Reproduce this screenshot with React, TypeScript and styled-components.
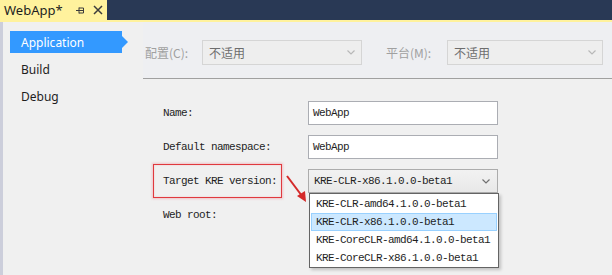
import styled, { createGlobalStyle } from "styled-components";

const GlobalStyle = createGlobalStyle`
  html, body {
    margin: 0;
    padding: 0;
    background: #f0f0f0;
  }
  body {
    width: 612px;
    height: 275px;
    overflow: hidden;
    font-family: "Noto Sans", "Noto Sans CJK SC", sans-serif;
  }
`;

const Window = styled.div`
  width: 612px;
  height: 275px;
  display: flex;
  flex-direction: column;
  background: #f0f0f0;
`;

const TabWell = styled.div`
  height: 20px;
  display: flex;
  background: #293955;
  border-bottom: 2px solid #fff29d;
`;

const Tab = styled.div`
  width: 107px;
  height: 20px;
  background: #fff29d;
  display: flex;
  align-items: center;
  padding-left: 4px;
  box-sizing: border-box;
  gap: 8px;
  color: #1e1e1e;
  font-size: 13px;
`;

const TabTitle = styled.span`
  width: 63px;
`;

const TabIcon = styled.svg`
  width: 10px;
  height: 10px;
  flex: none;
`;

const Body = styled.div`
  flex: 1;
  display: flex;
  border-left: 3px solid #cccedb;
`;

const Sidebar = styled.nav`
  width: 140px;
  padding-top: 9px;
  display: flex;
  flex-direction: column;
  gap: 5px;
`;

const NavItem = styled.div<{ $active?: boolean }>`
  position: relative;
  margin-left: 7px;
  width: 112px;
  height: 22px;
  box-sizing: border-box;
  padding-left: 11px;
  display: flex;
  align-items: center;
  font-size: 12px;
  color: ${(p) => (p.$active ? "#ffffff" : "#1e1e1e")};
  background: ${(p) => (p.$active ? "#3399ff" : "transparent")};

  ${(p) =>
    p.$active &&
    `
    &::after {
      content: "";
      position: absolute;
      right: -6px;
      top: 5px;
      border-top: 6px solid transparent;
      border-bottom: 6px solid transparent;
      border-left: 6px solid #3399ff;
    }
  `}
`;

const Content = styled.div`
  flex: 1;
  display: flex;
  flex-direction: column;
`;

const ConfigBar = styled.div`
  height: 57px;
  box-sizing: border-box;
  padding: 18px 0 0 2px;
  display: flex;
  gap: 24px;
  border-bottom: 1px solid #a0a0a0;
  background: #eeeff2;
`;

const ConfigGroup = styled.div<{ $labelWidth: number; $width: number }>`
  display: flex;
  align-items: flex-start;
  width: ${(p) => p.$labelWidth + p.$width}px;

  & > span {
    width: ${(p) => p.$labelWidth}px;
  }
  & > div {
    width: ${(p) => p.$width}px;
  }
`;

const ConfigLabel = styled.span`
  height: 25px;
  display: flex;
  align-items: center;
  font-family: "Noto Sans CJK SC", sans-serif;
  font-size: 12px;
  color: #a0a0a0;
`;

const DisabledSelect = styled.div`
  height: 25px;
  box-sizing: border-box;
  border: 1px solid #d5d5d5;
  background: #eeeeee;
  display: flex;
  align-items: center;
  justify-content: space-between;
  padding: 0 6px 0 6px;
  font-family: "Noto Sans CJK SC", sans-serif;
  font-size: 12px;
  color: #6d6d6d;
`;

const Chevron = styled.svg<{ $color?: string }>`
  width: 8px;
  height: 5px;
  flex: none;
  stroke: ${(p) => p.$color || "#b8b8b8"};
`;

const Form = styled.div`
  position: relative;
  padding: 22px 0 0 20px;
  display: grid;
  grid-template-columns: 145px 190px;
  grid-auto-rows: 24px;
  row-gap: 10px;
  font-family: "Liberation Mono", monospace;
  font-size: 11px;
  letter-spacing: -0.6px;
  color: #1e1e1e;
`;

const Label = styled.div<{ $marked?: boolean }>`
  display: flex;
  align-items: center;
  ${(p) =>
    p.$marked &&
    `
    margin: -5px 0 -5px -10px;
    width: 129px;
    padding-left: 9px;
    box-sizing: border-box;
    border: 1px solid #e0393e;
    box-shadow: 0 0 2px 1px rgba(240, 140, 150, 0.45), inset 0 0 2px rgba(240, 140, 150, 0.4);
  `}
`;

const TextBox = styled.div`
  box-sizing: border-box;
  border: 1px solid #abadb3;
  background: #ffffff;
  display: flex;
  align-items: center;
  padding-left: 4px;
`;

const SelectBox = styled.div`
  position: relative;
  box-sizing: border-box;
  border: 1px solid #acacac;
  background: linear-gradient(#f2f2f2, #e8e8e8);
  display: flex;
  align-items: center;
  justify-content: space-between;
  padding: 0 7px 0 5px;
`;

const DropList = styled.div`
  position: absolute;
  left: 0;
  top: 23px;
  width: 190px;
  box-sizing: border-box;
  border: 1px solid #646464;
  background: #ffffff;
  padding: 1px 1px 0;
  box-shadow: 2px 2px 3px rgba(0, 0, 0, 0.2);
  z-index: 2;
`;

const DropItem = styled.div<{ $selected?: boolean }>`
  height: 18px;
  box-sizing: border-box;
  display: flex;
  align-items: center;
  padding-left: 4px;
  border: 1px solid ${(p) => (p.$selected ? "#99d1ff" : "transparent")};
  background: ${(p) => (p.$selected ? "#cce8ff" : "transparent")};
`;

const Pointer = styled.svg`
  position: absolute;
  left: 142px;
  top: 95px;
  width: 24px;
  height: 30px;
`;

const kreVersions = [
  "KRE-CLR-amd64.1.0.0-beta1",
  "KRE-CLR-x86.1.0.0-beta1",
  "KRE-CoreCLR-amd64.1.0.0-beta1",
  "KRE-CoreCLR-x86.1.0.0-beta1",
];

function DownArrow({ color }: { color?: string }) {
  return (
    <Chevron $color={color} viewBox="0 0 8 5" fill="none" strokeWidth="1.2">
      <path d="M0.5 0.5 L4 4 L7.5 0.5" />
    </Chevron>
  );
}

export default function App() {
  return (
    <Window>
      <GlobalStyle />
      <TabWell>
        <Tab>
          <TabTitle>WebApp*</TabTitle>
          <TabIcon viewBox="0 0 10 10" fill="none" stroke="#3c3c3c" strokeWidth="1">
            <path d="M1 5.5 H4 M4 2.5 V8.5 M4 3 H8.5 M4 8 H8.5 M8.5 3 V8 M4 5.5 H8.5" />
          </TabIcon>
          <TabIcon viewBox="0 0 10 10" fill="none" stroke="#3c3c3c" strokeWidth="1.5">
            <path d="M1 1 L9 9 M9 1 L1 9" />
          </TabIcon>
        </Tab>
      </TabWell>
      <Body>
        <Sidebar>
          <NavItem $active>Application</NavItem>
          <NavItem>Build</NavItem>
          <NavItem>Debug</NavItem>
        </Sidebar>
        <Content>
          <ConfigBar>
            <ConfigGroup $labelWidth={57} $width={160}>
              <ConfigLabel>配置(C):</ConfigLabel>
              <DisabledSelect>
                不适用
                <DownArrow />
              </DisabledSelect>
            </ConfigGroup>
            <ConfigGroup $labelWidth={61} $width={156}>
              <ConfigLabel>平台(M):</ConfigLabel>
              <DisabledSelect>
                不适用
                <DownArrow />
              </DisabledSelect>
            </ConfigGroup>
          </ConfigBar>
          <Form>
            <Label>Name:</Label>
            <TextBox>WebApp</TextBox>
            <Label>Default namespace:</Label>
            <TextBox>WebApp</TextBox>
            <Label $marked>Target KRE version:</Label>
            <SelectBox>
              KRE-CLR-x86.1.0.0-beta1
              <DownArrow color="#707070" />
              <DropList>
                {kreVersions.map((v, i) => (
                  <DropItem key={v} $selected={i === 1}>
                    {v}
                  </DropItem>
                ))}
              </DropList>
            </SelectBox>
            <Label>Web root:</Label>
            <div />
            <Pointer viewBox="0 0 24 30">
              <path d="M2 2 L17 22" stroke="#d42a2a" strokeWidth="2" fill="none" />
              <path d="M12 22 L21 28 L20 17 Z" fill="#d42a2a" />
            </Pointer>
          </Form>
        </Content>
      </Body>
    </Window>
  );
}
